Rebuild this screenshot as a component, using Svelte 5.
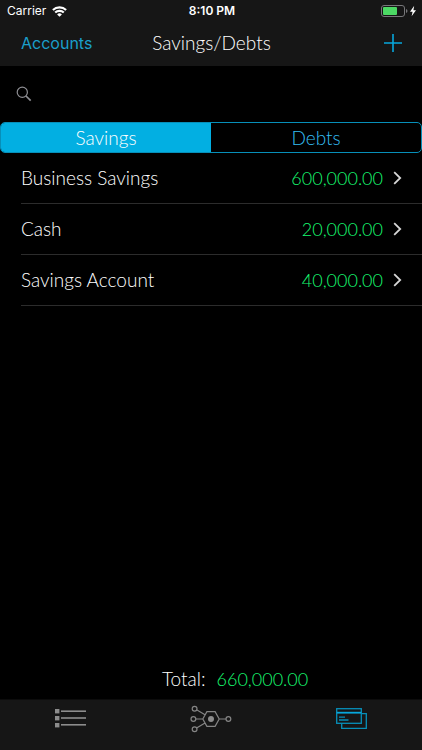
<script>
  const accounts = {
    Savings: [
      { name: 'Business Savings', amount: 600000 },
      { name: 'Cash', amount: 20000 },
      { name: 'Savings Account', amount: 40000 }
    ],
    Debts: []
  };
  let kind = $state('Savings');
  let query = $state('');
  let rows = $derived(
    accounts[kind].filter((a) => a.name.toLowerCase().includes(query.toLowerCase()))
  );
  let total = $derived(accounts[kind].reduce((sum, a) => sum + a.amount, 0));
  const money = (n) => n.toLocaleString('en-US', { minimumFractionDigits: 2 });
</script>

<div class="app">
  <header>
    <div class="status">
      <div class="carrier">
        <span>Carrier</span>
        <svg width="15" height="11" viewBox="0 0 15 11" aria-hidden="true">
          <g fill="none" stroke="#fff" stroke-width="2.1">
            <path d="M.9 4.1a9.4 9.4 0 0 1 13.2 0" />
            <path d="M3.2 6.6a6.1 6.1 0 0 1 8.6 0" />
          </g>
          <path d="M7.5 10.8 5.1 8.4a3.4 3.4 0 0 1 4.8 0z" fill="#fff" />
        </svg>
      </div>
      <time>8:10 PM</time>
      <div class="power">
        <svg width="36" height="12" viewBox="0 0 36 12" aria-hidden="true">
          <rect x=".5" y=".5" width="23" height="11" rx="2.5" fill="none" stroke="#77777a" />
          <rect x="2" y="2" width="14" height="8" rx="1" fill="#4cd964" />
          <path d="M25 4q1.5.4 1.5 2T25 8z" fill="#77777a" />
          <path d="M33.2.8 29 6.8h2.6L30.6 11.2 35 5.2h-2.6z" fill="#fff" />
        </svg>
      </div>
    </div>
    <nav class="bar">
      <a class="back" href="#accounts">Accounts</a>
      <h1>Savings/Debts</h1>
      <button class="add" aria-label="Add account">
        <svg width="18" height="18" viewBox="0 0 18 18" aria-hidden="true">
          <path d="M9 0v18M0 9h18" stroke="#07a7dc" stroke-width="1.6" />
        </svg>
      </button>
    </nav>
  </header>

  <main>
    <label class="search">
      <svg width="16" height="16" viewBox="0 0 16 16" aria-hidden="true">
        <circle cx="6.3" cy="6.3" r="5.1" fill="none" stroke="#8e8e93" stroke-width="1.2" />
        <path d="m10 10 4.7 4.6" stroke="#8e8e93" stroke-width="1.7" />
      </svg>
      <input type="search" aria-label="Search accounts" bind:value={query} />
    </label>

    <div class="segments">
      {#each Object.keys(accounts) as name}
        <button class:active={kind === name} aria-pressed={kind === name} onclick={() => (kind = name)}>
          {name}
        </button>
      {/each}
    </div>

    <ul>
      {#each rows as row}
        <li>
          <a href="#account">
            <span class="name">{row.name}</span>
            <span class="amount">{money(row.amount)}</span>
            <svg width="9" height="14" viewBox="0 0 9 14" aria-hidden="true">
              <path d="m1.2 1.2 6 5.8-6 5.8" fill="none" stroke="#d6d6d6" stroke-width="1.8" />
            </svg>
          </a>
        </li>
      {/each}
    </ul>

    <p class="total">
      <span class="label">Total:</span>
      <span class="amount">{money(total)}</span>
    </p>
  </main>

  <nav class="tabs">
    <a href="#list" aria-label="List">
      <svg width="32" height="20" viewBox="0 0 32 20" aria-hidden="true">
        <g fill="#8c8c8c">
          <rect x="1" y="0" width="4.4" height="4.4" />
          <rect x="1" y="7" width="4.4" height="4.4" />
          <rect x="1" y="14" width="4.4" height="4.4" />
          <rect x="7" y="1.4" width="25" height="1.6" />
          <rect x="7" y="8.2" width="25" height="1.6" />
          <rect x="7" y="15" width="25" height="1.6" />
        </g>
      </svg>
    </a>
    <a href="#network" aria-label="Network">
      <svg width="42" height="28" viewBox="0 0 42 28" aria-hidden="true">
        <g fill="none" stroke="#858585" stroke-width="1.2">
          <path d="m12.8 14 4.1-7.4h8.2l4.1 7.4-4.1 7.4h-8.2zM5.8 14h7M29.2 14H36M7 5l8 4.8M7 22.8l8-4.8" />
          <circle cx="4.6" cy="3.7" r="2.4" />
          <circle cx="3.4" cy="14" r="2.4" />
          <circle cx="4.6" cy="24.3" r="2.4" />
          <circle cx="38.4" cy="14" r="2.4" />
        </g>
        <circle cx="21" cy="14" r="3" fill="#8c8c8c" />
      </svg>
    </a>
    <a href="#savings" aria-label="Savings and debts" aria-current="page">
      <svg width="31" height="21" viewBox="0 0 31 21" aria-hidden="true">
        <g fill="none" stroke="#078fb9" stroke-width="1.3">
          <rect x=".7" y=".7" width="24.6" height="14.6" />
          <path d="M25.5 5.7h4.8v14.6H5.7v-4.8M3 9.2h6M3 12h9.5" />
        </g>
        <path d="M.7 4.7h24.6" stroke="#07a7dc" stroke-width="1.8" />
      </svg>
    </a>
  </nav>
</div>

<style>
  :global(body) {
    margin: 0;
    background: #000;
  }
  .app {
    min-height: 100vh;
    display: flex;
    flex-direction: column;
    background: #000;
    color: #fff;
    font: 300 19px/24px Lato, 'Open Sans', sans-serif;
  }
  a {
    color: inherit;
    text-decoration: none;
  }
  button {
    margin: 0;
    padding: 0;
    border: 0;
    background: none;
    color: inherit;
    font: inherit;
    cursor: pointer;
  }
  svg {
    display: block;
    flex: none;
  }
  header {
    background: #161616;
  }
  .status,
  .bar {
    display: grid;
    grid-template-columns: 1fr auto 1fr;
    align-items: center;
  }
  .status {
    height: 22px;
    padding: 0 5px 0 7px;
    font: 12px/22px Inter, 'Liberation Sans', sans-serif;
  }
  .status time {
    font-weight: 600;
  }
  .carrier {
    display: flex;
    align-items: center;
    gap: 6px;
  }
  .power,
  .add {
    justify-self: end;
  }
  .bar {
    height: 42px;
    padding: 0 20px 2px 21px;
  }
  .back {
    color: #1a9fcb;
    font: 16px/24px Inter, 'Liberation Sans', sans-serif;
  }
  h1 {
    margin: 0;
    font: inherit;
  }
  main {
    flex: 1;
    display: flex;
    flex-direction: column;
  }
  .search {
    display: flex;
    align-items: center;
    gap: 8px;
    height: 56px;
    padding: 0 16px;
  }
  .search input {
    flex: 1;
    min-width: 0;
    border: 0;
    outline: 0;
    background: none;
    color: inherit;
    font: inherit;
  }
  .segments {
    display: flex;
    height: 31px;
    box-sizing: border-box;
    border: 1px solid #078fb9;
    border-radius: 5px;
    overflow: hidden;
  }
  .segments button {
    flex: 1;
    color: #34bdf2;
  }
  .segments .active {
    background: #02afe2;
    color: #fff;
  }
  ul {
    flex: 1;
    margin: 0;
    padding: 0 0 0 21px;
    list-style: none;
  }
  li a {
    display: flex;
    align-items: center;
    gap: 10px;
    height: 50px;
    padding-right: 20px;
    border-bottom: 1px solid #2c2c2c;
  }
  .name {
    flex: 1;
  }
  .amount {
    color: #16fa70;
    font-size: 18px;
  }
  .total {
    display: grid;
    grid-template-columns: 1fr 1fr;
    gap: 11px;
    margin: 0;
    padding: 8px 0;
  }
  .label {
    text-align: right;
  }
  .tabs {
    display: flex;
    height: 50px;
    border-top: 1px solid #0c0c0c;
    background: #161616;
  }
  .tabs a {
    flex: 1;
    display: flex;
    justify-content: center;
    align-items: center;
    padding-bottom: 13px;
  }
</style>
